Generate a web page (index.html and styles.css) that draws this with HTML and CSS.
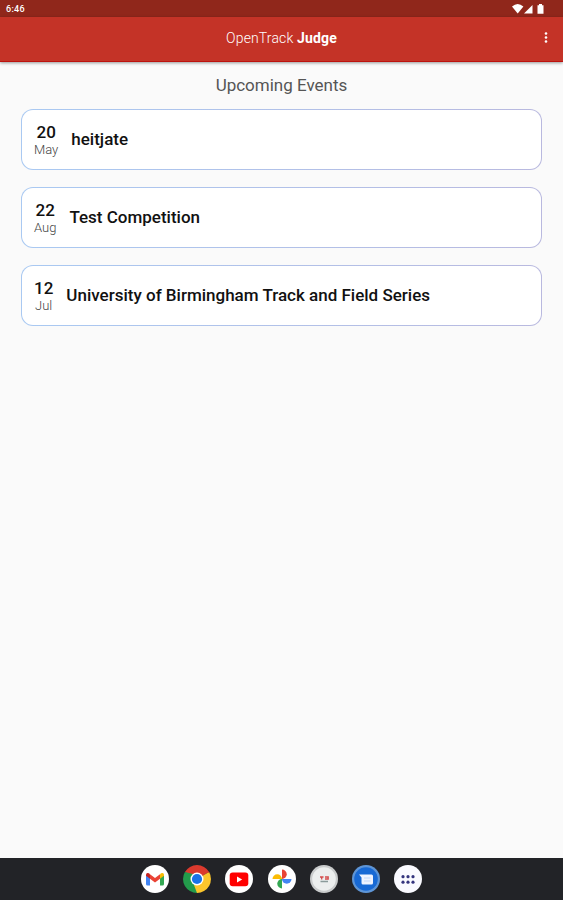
FILE: index.html
```html
<!DOCTYPE html>
<html lang="en">
<head>
<meta charset="utf-8">
<title>OpenTrack Judge</title>
<link rel="stylesheet" href="styles.css">
</head>
<body>
<div class="status">
  <span>6:46</span>
  <svg class="status-icons" width="34" height="12" viewBox="0 0 34 12" fill="#fff"><path d="M0 4.500Q5.700 -.5 11.400 4.500L5.700 11.500Z"/><path d="M12 11.500 20.500 3V11.500Z"/><path d="M25.500 3.200h1.500v-1.200h3v1.200h1.500v8.600h-6z"/></svg>
</div>
<header class="appbar">
  <h1>OpenTrack <b>Judge</b></h1>
  <svg class="more" width="4" height="14" viewBox="0 0 4 14" fill="#fff"><circle cx="2" cy="2.500" r="1.300"/><circle cx="2" cy="6.500" r="1.300"/><circle cx="2" cy="10.500" r="1.300"/></svg>
</header>
<main>
  <h2>Upcoming Events</h2>
  <section class="events">
    <article class="event"><div class="date"><b>20</b><span>May</span></div><h3>heitjate</h3></article>
    <article class="event"><div class="date"><b>22</b><span>Aug</span></div><h3>Test Competition</h3></article>
    <article class="event"><div class="date"><b>12</b><span>Jul</span></div><h3>University of Birmingham Track and Field Series</h3></article>
  </section>
</main>
<nav class="taskbar">
  <svg viewBox="0 0 28 28"><circle cx="14" cy="14" r="14" fill="#fff"/><path d="M5 9.500 9 12.500V20.500H6.500Q5 20.500 5 19Z" fill="#4285f4"/><path d="M23 9.500 19 12.500V20.500h2.500Q23 20.500 23 19Z" fill="#34a853"/><path d="M9 9.200 14 13l5-3.800v4.600L14 17.600 9 13.800Z" fill="#ea4335"/><path d="M5 9.700Q5.200 7 8 8.300L9 9.200v4.600L5 10.800Z" fill="#c5221f"/><path d="M23 9.700Q22.800 7 20 8.300L19 9.200v4.600l4-3Z" fill="#fbbc04"/></svg>
  <svg viewBox="0 0 28 28"><path d="M14 14 1.900 7A14 14 0 0 1 26.100 7Z" fill="#db3a2e"/><path d="M14 14 26.100 7A14 14 0 0 1 14 28Z" fill="#fbc52c"/><path d="M14 14V28A14 14 0 0 1 1.900 7Z" fill="#239b4b"/><path d="M14 7.500H26.400L26.100 7 14 5Z" fill="#db3a2e"/><path d="M19.600 17.200 14 28 11 20Z" fill="#fbc52c"/><path d="M8.400 17.200 1.900 7 10 9Z" fill="#239b4b"/><circle cx="14" cy="14" r="6.500" fill="#fff"/><circle cx="14" cy="14" r="5.100" fill="#1a73e8"/></svg>
  <svg viewBox="0 0 28 28"><circle cx="14" cy="14" r="14" fill="#fff"/><rect x="4.700" y="7.500" width="18.600" height="13.800" rx="3" fill="#f00"/><path d="m12 11.400 5.200 3L12 17.400Z" fill="#fff"/></svg>
  <svg viewBox="0 0 28 28"><circle cx="14" cy="14" r="14" fill="#fff"/><path d="M14 14V4.500a4.750 4.750 0 0 1 0 9.500Z" fill="#ea4335"/><path d="M14 14h9.500a4.750 4.750 0 0 1-9.500 0Z" fill="#4285f4"/><path d="M14 14v9.500a4.750 4.750 0 0 1 0-9.500Z" fill="#34a853"/><path d="M14 14H4.500a4.750 4.750 0 0 1 9.500 0Z" fill="#fbbc04"/></svg>
  <svg viewBox="0 0 28 28"><circle cx="14" cy="14" r="14" fill="#c9cbcc"/><circle cx="14" cy="14" r="11.800" fill="#eceeee"/><path d="M10 12h3.500M11.700 12v2.500M15 12h3.200v2H15" stroke="#d44b4b" stroke-width="1.300" fill="none"/><path d="M10.500 16.500h7.500" stroke="#8b9b9b" stroke-width="1.500"/></svg>
  <svg viewBox="0 0 28 28"><circle cx="14" cy="14" r="14" fill="#5e95d6"/><circle cx="14" cy="14" r="11.800" fill="#1769d5"/><path d="M7 9.500h12.500Q21 9.500 21 11v7Q21 19.500 19.500 19.500H11Q9.500 19.500 9.500 18V12.500Z" fill="#eef3ff"/><path d="M12 13h6.500M12 16h6.500" stroke="#c3d7f8" stroke-width="1"/></svg>
  <svg viewBox="0 0 28 28"><circle cx="14" cy="14" r="14" fill="#fafaff"/><g fill="#34347e"><circle cx="9" cy="11.700" r="1.600"/><circle cx="14" cy="11.700" r="1.600"/><circle cx="19" cy="11.700" r="1.600"/><circle cx="9" cy="17.200" r="1.600"/><circle cx="14" cy="17.200" r="1.600"/><circle cx="19" cy="17.200" r="1.600"/></g></svg>
</nav>
</body>
</html>
```
FILE: styles.css
```css
* { box-sizing: border-box; margin: 0; }
body { height: 900px; display: flex; flex-direction: column; overflow: hidden; background: #fafafa; font-family: Roboto, sans-serif; color: #111; }
.status { height: 17px; flex: none; background: #90271b; color: #fff; font-size: 9px; font-weight: 500; line-height: 19px; letter-spacing: .3px; padding: 0 17px 0 6px; display: flex; justify-content: space-between; }
.status-icons { margin-top: 2px; }
.appbar { height: 45px; flex: none; background: #c43327; border-bottom: 1px solid #bd120e; box-shadow: 0 1px 3px rgba(0, 0, 0, .4); color: #fff; display: grid; grid-template-columns: 1fr auto 1fr; align-items: center; padding: 0 15px 3px; }
.appbar h1 { grid-column: 2; font-size: 14px; line-height: 18px; font-weight: 300; letter-spacing: .15px; }
.appbar b { font-weight: 700; }
.more { justify-self: end; }
main { flex: 1; padding: 13px 21px 0; }
h2 { text-align: center; font-size: 17px; line-height: 20px; font-weight: 400; color: #555; }
.events { display: grid; gap: 18px; margin-top: 14px; }
.event { height: 61px; margin-bottom: -1px; border: 1px solid transparent; border-radius: 12px; background: linear-gradient(#fff, #fff) padding-box, linear-gradient(90deg, #a9c9f2, #b9b9df) border-box; display: flex; align-items: center; gap: 13px; padding: 0 13px 0 12px; }
.date { display: flex; flex-direction: column; align-items: center; line-height: 17px; padding-top: 3px; }
.date b { font-size: 17px; font-weight: 500; }
.date span { font-size: 13px; color: #444; font-weight: 300; }
h3 { font-size: 17px; line-height: 20px; font-weight: 500; padding-bottom: 2px; }
.taskbar { height: 42px; flex: none; background: #222327; display: flex; align-items: center; justify-content: center; gap: 14.200px; }
.taskbar svg { width: 28px; height: 28px; }
```
